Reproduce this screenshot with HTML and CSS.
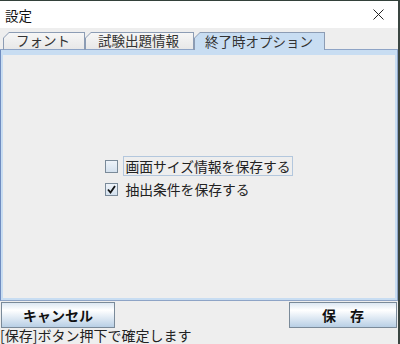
FILE: index.html
```html
<!DOCTYPE html>
<html lang="ja">
<head>
    <meta charset="UTF-8">
    <title>設定</title>
    <link rel="stylesheet" href="styles.css">
</head>
<body>
    <div class="window">
        <div class="titlebar">
            <span class="title">設定</span>
            <svg class="close" width="11" height="11" viewBox="0 0 11 11">
                <path d="M0.5 0.5 L10.5 10.5 M10.5 0.5 L0.5 10.5" stroke="#222" stroke-width="1" fill="none"/>
            </svg>
        </div>

        <div class="tabbar">
            <div class="tab-edge"></div>
            <div class="tab"><div class="tab-inner">フォント</div></div>
            <div class="tab"><div class="tab-inner">試験出題情報</div></div>
            <div class="tab selected"><div class="tab-inner">終了時オプション</div></div>
            <div class="tab-fill"></div>
        </div>

        <div class="panel">
            <div class="panel-body">
                <div class="options">
                    <label class="option">
                        <span class="box"></span>
                        <span class="option-text focused">画面サイズ情報を保存する</span>
                    </label>
                    <label class="option">
                        <span class="box">
                            <svg width="9" height="9" viewBox="0 0 9 9">
                                <path d="M1 4.5 L3.5 7.5 L8 1" stroke="#111" stroke-width="1.8" fill="none"/>
                            </svg>
                        </span>
                        <span class="option-text">抽出条件を保存する</span>
                    </label>
                </div>
            </div>
        </div>

        <div class="buttons">
            <button class="btn cancel">キャンセル</button>
            <button class="btn save">保　存</button>
        </div>
        <div class="status">[保存]ボタン押下で確定します</div>
    </div>
</body>
</html>
```

FILE: styles.css
```css
*, *::before, *::after {
    box-sizing: border-box;
}

html, body {
    margin: 0;
    width: 400px;
    height: 344px;
    overflow: hidden;
}
body {
    background: #eeeeee;
    font-family: "Noto Sans CJK JP", "DejaVu Sans", sans-serif;
    color: #222;
}
.window {
    display: flex;
    flex-direction: column;
    height: 344px;
    border-top: 1px solid #33413a;
    border-right: 2px solid #3a4540;
}

.titlebar {
    flex: 0 0 27px;
    display: flex;
    align-items: center;
    justify-content: space-between;
    background: #ffffff;
    padding: 0 14px 0 5px;
}
.title {
    font-size: 13.5px;
    color: #111;
}

.tabbar {
    flex: 0 0 22px;
    display: flex;
    align-items: flex-end;
}
.tab-edge {
    width: 3px;
    border-bottom: 1px solid #8ea4c6;
}
.tab-fill {
    flex: 1;
    border-bottom: 1px solid #8ea4c6;
}
.tab {
    height: 18px;
    display: flex;
    background: #8c9cb4;
    clip-path: polygon(0 100%, 0 6px, 6px 0, 100% 0, 100% 100%);
    padding: 1px 1px 0 1px;
}
.tab-inner {
    flex: 1;
    display: flex;
    align-items: center;
    padding: 0 14px 0 12px;
    font-size: 13.5px;
    line-height: 1;
    color: #333;
    background: linear-gradient(#f6f6f6, #e8e8e8);
    clip-path: polygon(0 100%, 0 5px, 5px 0, 100% 0, 100% 100%);
    border-bottom: 1px solid #8ea4c6;
}
.tab.selected .tab-inner {
    padding: 0 11px 0 10px;
    background: #c8ddf2;
    border-bottom: none;
}

.panel {
    flex: 0 0 251px;
    display: flex;
    border-left: 1px solid #6f8cc0;
    border-right: 1px solid #8ea4c6;
    border-bottom: 1px solid #8ea4c6;
}
.panel-body {
    flex: 1;
    display: flex;
    align-items: center;
    justify-content: center;
    border: 2px solid #c8ddf2;
    border-top-width: 5px;
    background: #eeeeee;
}
.options {
    display: flex;
    flex-direction: column;
    gap: 3px;
    margin-top: 2px;
}
.option {
    display: flex;
    align-items: center;
    gap: 5px;
    font-size: 13.8px;
    line-height: 16px;
    color: #222;
}
.box {
    width: 13px;
    height: 13px;
    display: flex;
    align-items: center;
    justify-content: center;
    border: 1px solid #7a8a99;
    background: linear-gradient(#eef3f9, #d4e1ee);
}
.option-text {
    padding: 1px 1px;
    border: 1px solid transparent;
}
.option-text.focused {
    border-color: #b3c7dd;
}

.buttons {
    flex: 0 0 26px;
    display: flex;
    justify-content: space-between;
    margin-top: 1px;
    padding: 0 1px 0 1px;
}
.btn {
    font-family: "Noto Sans CJK JP", "DejaVu Sans", sans-serif;
    font-weight: bold;
    font-size: 14px;
    color: #111;
    border: 1px solid #7a8a99;
    background: linear-gradient(#dde8f3 0%, #ffffff 30%, #b8cfe5 100%);
    padding: 0;
    height: 26px;
}
.cancel {
    width: 114px;
}
.save {
    width: 108px;
}

.status {
    flex: 1;
    font-size: 14px;
    line-height: 15px;
    color: #222;
    white-space: nowrap;
}
```
